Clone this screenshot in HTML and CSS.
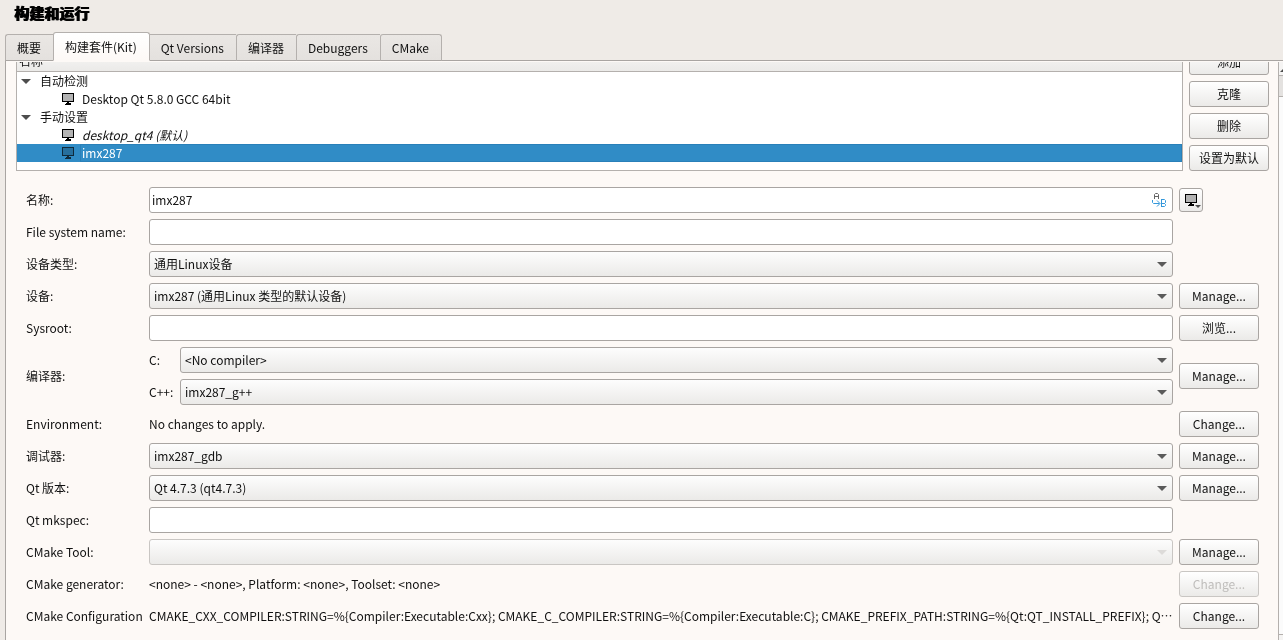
FILE: index.html
```html
<!DOCTYPE html>
<html lang="zh-CN">
<head>
<meta charset="utf-8">
<title>构建和运行</title>
<link rel="stylesheet" href="styles.css">
</head>
<body>
<svg class="defs" aria-hidden="true">
  <symbol id="monitor" viewBox="0 0 12 12">
    <rect class="screen" x="0.5" y="0.5" width="11" height="8"/>
    <path class="stand" d="M5 9h2v1h2v2H3v-1h1v-1h1z"/>
  </symbol>
</svg>
<h1 class="title">构建和运行</h1>
<div class="tabs" role="tablist">
  <button class="tab" role="tab">概要</button>
  <button class="tab active" role="tab" aria-selected="true">构建套件(Kit)</button>
  <button class="tab" role="tab">Qt Versions</button>
  <button class="tab" role="tab">编译器</button>
  <button class="tab" role="tab">Debuggers</button>
  <button class="tab" role="tab">CMake</button>
</div>
<main class="panel">
  <div class="viewport">
    <div class="content">
      <section class="kits">
        <div class="tree" role="tree">
          <div class="tree-header">名称</div>
          <div class="node group" role="treeitem"><span class="twisty"></span>自动检测</div>
          <div class="node kit" role="treeitem"><svg class="monitor"><use href="#monitor"/></svg><span class="kit-name">Desktop Qt 5.8.0 GCC 64bit</span></div>
          <div class="node group" role="treeitem"><span class="twisty"></span>手动设置</div>
          <div class="node kit" role="treeitem"><svg class="monitor"><use href="#monitor"/></svg><em class="kit-name">desktop_qt4 (默认)</em></div>
          <div class="node kit selected" role="treeitem" aria-selected="true"><svg class="monitor"><use href="#monitor"/></svg><span class="kit-name">imx287</span></div>
        </div>
        <div class="actions">
          <button class="btn">添加</button>
          <button class="btn">克隆</button>
          <button class="btn">删除</button>
          <button class="btn">设置为默认</button>
        </div>
      </section>
      <form class="form">
        <label for="name">名称:</label>
        <div class="name-field">
          <input class="text" id="name" type="text" value="imx287">
          <svg class="variables" viewBox="0 0 16 16" aria-hidden="true">
            <path class="letter-a" d="M3.500 7V2.500l1-1h2l1 1V7M3.500 4.500h4"/>
            <path class="letter-b" d="M10.500 7.500h3l1 1v2l-1 1h-3zM10.500 11.500h3l1 1v1l-1 1h-3zM10.500 7v8"/>
            <path class="letter-b" d="M1.500 8v2.500l1 1h6M6 8.500l3 3-3 3"/>
          </svg>
        </div>
        <button class="btn icon-btn" type="button" aria-label="图标"><svg class="monitor"><use href="#monitor"/></svg></button>

        <label for="fsname">File system name:</label>
        <input class="text" id="fsname" type="text">
        <span></span>

        <label for="devtype">设备类型:</label>
        <div class="combo"><select id="devtype"><option>通用Linux设备</option></select></div>
        <span></span>

        <label for="device">设备:</label>
        <div class="combo"><select id="device"><option>imx287 (通用Linux 类型的默认设备)</option></select></div>
        <button class="btn" type="button">Manage...</button>

        <label for="sysroot">Sysroot:</label>
        <input class="text" id="sysroot" type="text">
        <button class="btn" type="button">浏览...</button>

        <span>编译器:</span>
        <div class="compilers">
          <label for="cc">C:</label>
          <div class="combo"><select id="cc"><option>&lt;No compiler&gt;</option></select></div>
          <label for="cxx">C++:</label>
          <div class="combo"><select id="cxx"><option>imx287_g++</option></select></div>
        </div>
        <button class="btn" type="button">Manage...</button>

        <span>Environment:</span>
        <span class="value">No changes to apply.</span>
        <button class="btn" type="button">Change...</button>

        <label for="debugger">调试器:</label>
        <div class="combo"><select id="debugger"><option>imx287_gdb</option></select></div>
        <button class="btn" type="button">Manage...</button>

        <label for="qt">Qt 版本:</label>
        <div class="combo"><select id="qt"><option>Qt 4.7.3 (qt4.7.3)</option></select></div>
        <button class="btn" type="button">Manage...</button>

        <label for="mkspec">Qt mkspec:</label>
        <input class="text" id="mkspec" type="text">
        <span></span>

        <label for="cmake">CMake Tool:</label>
        <div class="combo disabled"><select id="cmake" disabled></select></div>
        <button class="btn" type="button">Manage...</button>

        <span>CMake generator:</span>
        <span class="value">&lt;none&gt; - &lt;none&gt;, Platform: &lt;none&gt;, Toolset: &lt;none&gt;</span>
        <button class="btn" type="button" disabled>Change...</button>

        <span>CMake Configuration</span>
        <span class="value">CMAKE_CXX_COMPILER:STRING=%{Compiler:Executable:Cxx}; CMAKE_C_COMPILER:STRING=%{Compiler:Executable:C}; CMAKE_PREFIX_PATH:STRING=%{Qt:QT_INSTALL_PREFIX}; Q⋯</span>
        <button class="btn" type="button">Change...</button>
      </form>
    </div>
  </div>
  <div class="scrollbar" aria-hidden="true">
    <div class="step up"></div>
    <div class="thumb"></div>
    <div class="step down"></div>
  </div>
</main>
</body>
</html>
```
FILE: styles.css
```css
* { box-sizing: border-box; }

body {
  margin: 0;
  height: 100vh;
  display: flex;
  flex-direction: column;
  overflow: hidden;
  background: #efebe7;
  color: #111;
  font: 12px/18px "Noto Sans CJK SC", sans-serif;
}

button, input, select { font: inherit; color: inherit; margin: 0; }

.defs { display: none; }

.title {
  margin: 0;
  padding: 3px 14px 9px;
  font-size: 15px;
  line-height: 20px;
  font-weight: 900;
  color: #000;
  text-shadow: 1px 0 #000;
}

.tabs {
  display: flex;
  align-items: flex-end;
  padding-left: 5px;
  height: 29px;
  margin-bottom: -1px;
  z-index: 1;
}

.tab {
  height: 27px;
  padding: 0 12px 0 11px;
  border: 1px solid #b4b0ad;
  border-right-width: 0;
  border-bottom-color: #a9a5a2;
  border-radius: 3px 0 0 0;
  background: linear-gradient(#eae7e4, #e4e1de);
  white-space: nowrap;
}

.tab:last-child { border-right-width: 1px; border-radius: 3px 3px 0 0; }

.tab.active {
  height: 29px;
  border-right-width: 1px;
  border-bottom-color: #fdf9f6;
  border-radius: 3px 3px 0 0;
  background: linear-gradient(#fff, #fdf9f6);
}

.tab.active + .tab { border-left-width: 0; padding-left: 11px; border-radius: 0; }

.panel {
  flex: 1;
  min-height: 0;
  display: flex;
  margin-left: 5px;
  padding-top: 1px;
  border: solid #a9a5a2;
  border-width: 1px 0 0 1px;
  background: #fdf9f6;
}

.viewport { flex: 1; min-width: 0; overflow: hidden; }

.content { margin-top: -13px; padding: 0 9px 0 10px; }

.kits { display: flex; gap: 6px; }

.tree {
  flex: 1;
  padding-bottom: 8px;
  border: 1px solid #b4b0ad;
  background: #fff;
}

.tree-header {
  height: 22px;
  padding: 2px 2px 0;
  border-bottom: 1px solid #b4b0ad;
  background: linear-gradient(#f8f7f6, #ebeae8);
}

.node { display: flex; align-items: center; height: 18px; }

.group { gap: 9px; padding-left: 4px; }

.twisty {
  border: solid transparent;
  border-width: 5px 5px 0;
  border-top-color: #4d4d4d;
}

.kit { gap: 6px; padding-left: 45px; }

.kit-name { flex: 1; padding-left: 2px; }

.selected { background: #308cc6; color: #fff; }
.selected .kit-name { border: 1px solid #2980b9; height: 18px; line-height: 16px; padding-left: 1px; }

.monitor { width: 12px; height: 12px; fill: #000; }
.screen { fill: #b3b3b3; stroke: #000; }
.selected .monitor { opacity: .7; color: #2a6f9c; }
.selected .monitor { background: linear-gradient(#12639a, #12639a) no-repeat 0 0 / 12px 9px; mix-blend-mode: multiply; }

.actions { display: flex; flex-direction: column; gap: 6px; width: 80px; }

.btn {
  height: 26px;
  padding: 0;
  border: 1px solid #a9a5a2;
  border-radius: 3px;
  background: linear-gradient(#fff, #ebeae8);
}

.btn:disabled { border-color: #c9c6c3; color: #bfbdbb; }

.form {
  display: grid;
  grid-template-columns: 117px minmax(0, 1fr) 80px;
  gap: 6px;
  align-items: center;
  padding: 16px 10px 12px;
  grid-auto-rows: minmax(26px, auto);
}

.form label, .form span { white-space: nowrap; }

.value { overflow: hidden; text-overflow: ellipsis; }

.text {
  width: 100%;
  height: 26px;
  padding: 0 2px 2px;
  border: 1px solid #a9a5a2;
  border-radius: 3px;
  background: #fff;
}

.name-field { position: relative; }

.variables {
  position: absolute;
  right: 6px;
  top: 5px;
  width: 16px;
  height: 16px;
  fill: none;
}

.letter-a { stroke: #666; }
.letter-b { stroke: #3498db; }

.icon-btn {
  position: relative;
  width: 24px;
  height: 24px;
  display: flex;
  align-items: center;
  justify-content: center;
}

.icon-btn::after {
  content: "";
  position: absolute;
  right: 1px;
  bottom: 3px;
  border: solid transparent;
  border-width: 3px 3px 0;
  border-top-color: #4d4d4d;
}

.combo { position: relative; }

.combo select {
  appearance: none;
  display: block;
  width: 100%;
  height: 26px;
  padding: 0 20px 0 4px;
  border: 1px solid #a9a5a2;
  border-radius: 3px;
  background: linear-gradient(#fdfdfd, #ebeae8);
}

.combo::after {
  content: "";
  position: absolute;
  right: 6px;
  top: 11px;
  border: solid transparent;
  border-width: 5px 5px 0;
  border-top-color: #5a5a5a;
  pointer-events: none;
}

.combo.disabled select { border-color: #c9c6c3; opacity: 1; }
.combo.disabled::after { border-top-color: #dddbd9; }

.compilers {
  display: grid;
  grid-template-columns: 25px minmax(0, 1fr);
  gap: 6px;
  align-items: center;
}

.scrollbar {
  display: flex;
  flex-direction: column;
  width: 5px;
  border-left: 1px solid #b4b0ad;
  background: #fbfbfb;
}

.step { background: #f5f4f3; }
.up { height: 13px; overflow: hidden; }
.up::before {
  content: "";
  display: block;
  width: 0;
  margin: 5px 0 0 1px;
  border: solid transparent;
  border-width: 0 5px 5px;
  border-bottom-color: #4d4d4d;
}
.down { height: 6px; margin-top: auto; border-top: 1px solid #b4b0ad; }
.thumb { height: 22px; border: solid #b4b0ad; border-width: 1px 0; background: #e4e2e0; }
```
